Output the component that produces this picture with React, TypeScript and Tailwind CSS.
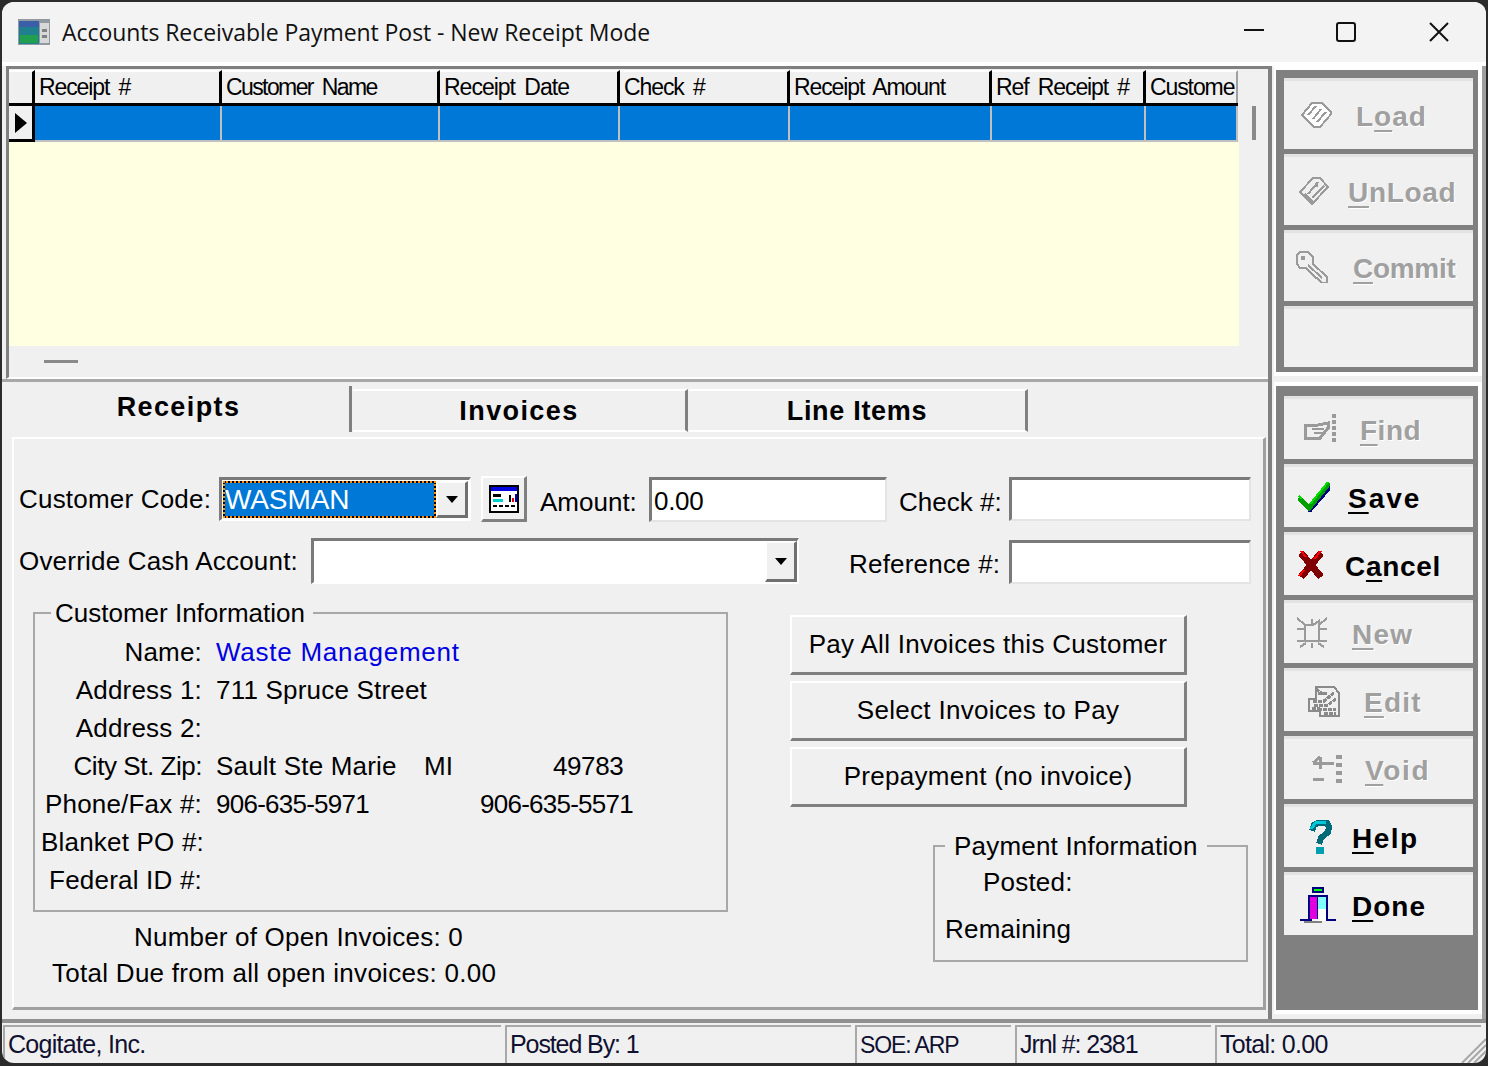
import React from "react";

const gridCols = [
  { name: "Receipt #", w: "w-[187px]", t: "tracking-[-1.1px]" },
  { name: "Customer Name", w: "w-[218px]", t: "tracking-[-1.6px]" },
  { name: "Receipt Date", w: "w-[180px]", t: "tracking-[-1px]" },
  { name: "Check #", w: "w-[170px]", t: "tracking-[-1.1px]" },
  { name: "Receipt Amount", w: "w-[202px]", t: "tracking-[-1.1px]" },
  { name: "Ref Receipt #", w: "w-[154px]", t: "tracking-[-1.1px]" },
  { name: "Custome", w: "w-[92px]", t: "tracking-[-1.1px]" },
];

function Px({ children, w = 32, h = 32 }: { children: React.ReactNode; w?: number; h?: number }) {
  return (
    <svg width={w} height={h} viewBox={`0 0 ${w} ${h}`} shapeRendering="crispEdges" fill="none" className="shrink-0">
      {children}
    </svg>
  );
}

const G = "#9a9a9a";

const LoadIcon = () => (
  <Px h={28}>
    <path d="M2 14 L12 2 L22 2 L32 12 L20 26 L14 26 Z" fill="#fff" stroke={G} strokeWidth="2" />
    <path d="M8 14 L16 5 M13 18 L21 8 M17 21 L26 11" stroke={G} strokeWidth="2" />
  </Px>
);
const UnloadIcon = () => (
  <Px h={30}>
    <path d="M2 16 L15 2 L22 2 L30 11 L14 28 Z" fill="#f0f0f0" stroke={G} strokeWidth="2" />
    <path d="M7 18 L15 26 M10 18 L20 6 M14 22 L26 10" stroke={G} strokeWidth="2" />
    <rect x="17" y="8" width="3" height="3" fill={G} />
  </Px>
);
const KeyIcon = () => (
  <Px h={32}>
    <path d="M4 1 H12 L17 6 V13 L31 26 V32 H26 L22 28 L19 26 L10 17 H4 L1 13 V4 Z" fill="#f0f0f0" stroke={G} strokeWidth="2" />
    <rect x="5" y="5" width="4" height="4" fill={G} />
    <path d="M12 14 L26 27" stroke={G} strokeWidth="2" />
  </Px>
);
const FindIcon = () => (
  <Px h={30}>
    <path d="M1 11 H14 L24 9 V14 L16 24 H6 L1 24 Z" stroke={G} strokeWidth="3" fill="#f0f0f0" />
    <path d="M8 15 H20 M10 19 H18" stroke={G} strokeWidth="2" />
    <path d="M30 0 V30" stroke={G} strokeWidth="4" strokeDasharray="4 2" />
  </Px>
);
const CheckIcon = () => (
  <Px h={30}>
    <path d="M2 18 L12 29 L32 6 V2" stroke="#000080" strokeWidth="3" />
    <path d="M1 16 L11 26 L31 1" stroke="#00a000" strokeWidth="5" />
    <path d="M1 14 L4 17 M12 22 L30 0" stroke="#00e000" strokeWidth="2" />
  </Px>
);
const CrossIcon = () => (
  <Px w={26} h={30}>
    <path d="M3 3 L23 27 M23 3 L3 27" stroke="#800000" strokeWidth="7" />
    <path d="M3 1 L8 7 M23 1 L16 9 M1 26 L6 20" stroke="#ff0000" strokeWidth="2" />
  </Px>
);
const NewIcon = () => (
  <Px h={32}>
    <path d="M9 8 H17 L23 4 V24 H9 Z" fill="#f0f0f0" stroke={G} strokeWidth="2" />
    <path d="M1 1 L9 8 M31 1 L23 8 M1 12 H9 M23 12 H31 M1 24 H9 M23 24 H31 M4 30 L10 26 M28 30 L22 26 M16 2 V8 M16 26 V31" stroke={G} strokeWidth="2" />
  </Px>
);
const EditIcon = () => (
  <Px h={32}>
    <path d="M8 2 H26 L31 8 V31 H12 V26 H1 V14 H8 Z" fill="#f0f0f0" stroke="#8a8a8a" strokeWidth="2" />
    <path d="M5 16 H16 L26 8 M6 20 H20 L28 14 M10 24 H28 M16 28 H28 M8 4 L16 10 M10 8 H20 M4 23 H12" stroke="#8a8a8a" strokeWidth="3" strokeDasharray="4 1" />
  </Px>
);
const VoidIcon = () => (
  <Px w={30} h={28}>
    <path d="M1 8 H22 M8 2 V14 M1 8 L8 2 M1 24 H12" stroke={G} strokeWidth="3" />
    <path d="M27 0 V28" stroke={G} strokeWidth="6" strokeDasharray="4 4" />
  </Px>
);
const HelpIcon = () => (
  <Px w={24} h={34}>
    <path d="M4 11 L6 5 L10 3 H19 L21 7 L20 12 L13 18 L11 24" stroke="#006a78" strokeWidth="6" />
    <path d="M3 9 L8 2 H18" stroke="#00c8d8" strokeWidth="3" />
    <rect x="8" y="27" width="8" height="7" fill="#00a0b0" />
  </Px>
);
const DoneIcon = () => (
  <Px w={36} h={36}>
    <rect x="12" y="0" width="12" height="6" fill="#000080" />
    <rect x="14" y="2" width="8" height="2" fill="#00ff00" />
    <rect x="8" y="8" width="20" height="24" fill="#000080" />
    <rect x="10" y="10" width="7" height="22" fill="#e000e0" />
    <rect x="18" y="10" width="8" height="14" fill="#80ffff" />
    <rect x="18" y="22" width="8" height="12" fill="#fff" />
    <rect x="0" y="32" width="12" height="2" fill="#000080" />
    <rect x="26" y="32" width="10" height="2" fill="#000080" />
    <rect x="4" y="34" width="18" height="2" fill="#808080" />
  </Px>
);
const CalcIcon = () => (
  <Px w={30} h={28}>
    <rect x="1" y="1" width="28" height="26" fill="#fff" stroke="#000" strokeWidth="2" />
    <rect x="2" y="2" width="26" height="4" fill="#0000e0" />
    <rect x="4" y="9" width="8" height="3" fill="#000" />
    <rect x="4" y="14" width="10" height="3" fill="#00d0d0" />
    <rect x="20" y="10" width="2" height="7" fill="#000" />
    <rect x="23" y="13" width="2" height="4" fill="#e00000" />
    <rect x="26" y="9" width="2" height="8" fill="#0000c0" />
    <path d="M4 21 H26" stroke="#000" strokeWidth="2" strokeDasharray="4 2" />
  </Px>
);
const AppIcon = () => (
  <Px w={32} h={26}>
    <rect width="32" height="26" fill="#909aa0" />
    <rect x="1" y="2" width="20" height="23" fill="#1f7f8f" />
    <rect x="1" y="2" width="20" height="6" fill="#3a5fa8" />
    <rect x="2" y="16" width="18" height="8" fill="#1f9f4f" />
    <rect x="22" y="4" width="9" height="20" fill="#d8d8d8" />
    <rect x="24" y="10" width="5" height="3" fill="#808080" />
    <rect x="24" y="16" width="5" height="3" fill="#808080" />
  </Px>
);

function U({ children }: { children: React.ReactNode }) {
  return <span className="underline decoration-2 underline-offset-[4px]">{children}</span>;
}

function ToolButton({
  icon,
  label,
  disabled,
  className,
}: {
  icon: React.ReactNode;
  label: React.ReactNode;
  disabled?: boolean;
  className: string;
}) {
  return (
    <div
      className={`flex items-center bg-[#f0f0f0] border-t-[3px] border-t-[#e3e3e3] border-b-[3px] border-b-[#808080] text-[28px] font-bold ${
        disabled ? "text-[#a0a0a0] [text-shadow:1px_1px_0_#fff]" : "text-black"
      } ${className}`}
    >
      {icon}
      <span className="pt-[3px]">{label}</span>
    </div>
  );
}

function Sunken({ className, children }: { className: string; children?: React.ReactNode }) {
  return (
    <div
      className={`bg-white border-t-[3px] border-l-[3px] border-t-[#7a7a7a] border-l-[#7a7a7a] border-b-2 border-r-2 border-b-[#e4e4e4] border-r-[#e4e4e4] flex items-center text-[26px] tracking-[-0.3px] ${className}`}
    >
      {children}
    </div>
  );
}

function DropArrow() {
  return (
    <div className="w-[32px] h-full bg-[#f0f0f0] border-2 border-t-white border-l-white border-b-[3px] border-r-[3px] border-b-[#707070] border-r-[#707070] flex items-center justify-center shrink-0">
      <div className="w-0 h-0 border-l-[6px] border-r-[6px] border-t-[7px] border-l-transparent border-r-transparent border-t-black" />
    </div>
  );
}

function InfoRow({ label, children }: { label: React.ReactNode; children?: React.ReactNode }) {
  return (
    <div className="flex items-center h-[38px]">
      <div className="w-[161px] text-right shrink-0">{label}</div>
      <div className="ml-[14px] flex-1 flex">{children}</div>
    </div>
  );
}

function ActionButton({ label }: { label: string }) {
  return (
    <div className="h-[60px] w-[397px] flex items-center justify-center bg-[#f0f0f0] border-2 border-t-white border-l-white border-b-[3px] border-r-[3px] border-b-[#808080] border-r-[#808080] text-[26px] tracking-[0.3px]">
      {label}
    </div>
  );
}

function StatusCell({ className, children }: { className: string; children: React.ReactNode }) {
  return (
    <div className={`h-full flex items-center border-t-2 border-l-2 border-[#a8a8a8] pl-[3px] text-[#101030] ${className}`}>
      {children}
    </div>
  );
}

export default function App() {
  return (
    <div className="w-[1488px] h-[1066px] bg-[#2b2b2b] pt-[2px] px-[2px] pb-[3px] font-['Liberation_Sans',sans-serif] text-black overflow-hidden">
      <div className="h-full flex flex-col rounded-[12px] overflow-hidden bg-[#f0f0f0]">
        {/* Title bar */}
        <div className="h-[64px] border-b-[4px] border-b-white bg-[#f3f3f3] flex items-center shrink-0">
          <div className="ml-[16px]">
            <AppIcon />
          </div>
          <div className="ml-[12px] font-['Open_Sans',sans-serif] text-[23px] tracking-[-0.06px] text-[#111] flex-1">
            Accounts Receivable Payment Post - New Receipt Mode
          </div>
          <div className="flex items-center mr-[37px]">
            <svg width="20" height="20" viewBox="0 0 20 20" shapeRendering="crispEdges" className="mr-[72px]">
              <rect x="0" y="7" width="20" height="2" fill="#111" />
            </svg>
            <svg width="20" height="20" viewBox="0 0 20 20" className="mr-[73px]">
              <rect x="1" y="1" width="18" height="18" rx="2" fill="none" stroke="#111" strokeWidth="2" />
            </svg>
            <svg width="20" height="20" viewBox="0 0 20 20">
              <path d="M1 1 L19 19 M19 1 L1 19" stroke="#111" strokeWidth="2" />
            </svg>
          </div>
        </div>

        <div className="flex flex-1 min-h-0">
          {/* Left side */}
          <div className="w-[1270px] shrink-0 flex flex-col border-r-[4px] border-r-[#808080]">
            {/* Grid panel */}
            <div className="h-[316px] shrink-0 pl-[4px] border-b-[3px] border-b-[#a8a8a8]">
              <div className="h-[313px] border-t-[3px] border-l-[3px] border-[#808080] pt-[1px] border-b-2 border-b-white">
                <div className="flex h-[36px] w-fit border-b-[3px] border-black">
                  <div className="w-[26px] border-r-[3px] border-black bg-[#f0f0f0] shrink-0 border-t-2 border-t-white" />
                  {gridCols.map((c, i) => (
                    <div
                      key={c.name}
                      className={`${c.w} ${c.t} shrink-0 flex items-center pl-[4px] text-[23px] [word-spacing:4px] border-t-2 border-t-white ${
                        i < gridCols.length - 1 ? "border-r-[3px] border-r-black" : "border-r-2 border-r-[#a0a0a0]"
                      } whitespace-nowrap overflow-hidden`}
                    >
                      {c.name}
                    </div>
                  ))}
                </div>
                <div className="flex h-[36px]">
                  <div className="w-[26px] shrink-0 flex items-center justify-center border-r-[3px] border-b-[3px] border-black">
                    <div className="w-0 h-0 border-y-[10px] border-l-[12px] border-y-transparent border-l-black" />
                  </div>
                  {gridCols.map((c) => (
                    <div key={c.name} className={`${c.w} shrink-0 bg-[#0078d7] border-r-2 border-r-[#c0c0c0] border-b-2 border-b-[#c0c0c0]`} />
                  ))}
                  <div className="ml-[14px] w-[4px] h-[34px] bg-[#8a8a8a]" />
                </div>
                <div className="w-[1230px] h-[204px] bg-[#ffffe1]" />
                <div className="ml-[35px] mt-[14px] w-[34px] h-[3px] bg-[#8a8a8a]" />
              </div>
            </div>

            {/* Tabs */}
            <div className="flex-1 min-h-0 pl-[6px] pt-[4px] flex flex-col">
              <div className="flex h-[46px] shrink-0 items-end text-[27px] font-bold tracking-[1.4px]">
                <div className="w-[344px] h-[46px] flex items-center justify-center pb-[4px] border-r-[3px] border-r-[#808080]">
                  Receipts
                </div>
                <div className="w-[335px] h-[43px] ml-[1px] flex items-center justify-center pt-[1px] border-t-2 border-t-white border-r-[3px] border-r-[#808080] border-b-2 border-b-white">
                  Invoices
                </div>
                <div className="w-[339px] h-[43px] ml-[1px] flex items-center justify-center pt-[1px] tracking-[0.7px] border-t-2 border-t-white border-r-[3px] border-r-[#808080] border-b-2 border-b-white">
                  Line Items
                </div>
              </div>

              <div className="ml-[4px] mr-[2px] mt-[5px] h-[573px] border-t-2 border-l-2 border-white border-r-[3px] border-r-[#a0a0a0] border-b-[3px] border-b-[#a0a0a0] text-[26px] tracking-[0.2px] whitespace-nowrap">
                {/* Row one */}
                <div className="flex items-center h-[48px] mt-[36px] pl-[5px]">
                  <div className="w-[200px]">Customer Code:</div>
                  <div className="w-[252px] h-[44px] bg-white border-t-[3px] border-l-[3px] border-[#7a7a7a] border-b-2 border-r-2 border-b-white border-r-white flex p-[1px]">
                    <div className="flex-1 border-2 border-dotted border-[#ff9000] bg-black">
                      <div className="h-full bg-[#0078d7] text-white flex items-center text-[28px] font-normal tracking-[-0.1px]">WASMAN</div>
                    </div>
                    <DropArrow />
                  </div>
                  <div className="ml-[10px] w-[46px] h-[46px] bg-[#f0f0f0] border-2 border-t-white border-l-white border-b-[3px] border-r-[3px] border-b-[#808080] border-r-[#808080] flex items-center justify-center">
                    <CalcIcon />
                  </div>
                  <div className="ml-[13px] w-[109px] pt-[7px] tracking-[0px]">Amount:</div>
                  <Sunken className="w-[238px] h-[45px] pl-[2px] pt-[3px]">0.00</Sunken>
                  <div className="ml-[12px] w-[110px] pt-[7px] tracking-[0px]">Check #:</div>
                  <Sunken className="w-[242px] h-[44px]" />
                </div>

                {/* Row two */}
                <div className="flex items-center h-[46px] mt-[15px] pl-[5px]">
                  <div className="w-[292px]">Override Cash Account:</div>
                  <div className="w-[488px] h-[46px] bg-white border-t-[3px] border-l-[3px] border-[#7a7a7a] border-b-2 border-r-2 border-b-white border-r-white flex justify-end">
                    <DropArrow />
                  </div>
                  <div className="ml-[50px] w-[160px] pt-[6px]">Reference #:</div>
                  <Sunken className="w-[242px] h-[44px] self-end" />
                </div>

                <div className="flex mt-[14px]">
                  <div className="ml-[19px] w-[695px] shrink-0">
                    <fieldset className="h-[314px] border-2 border-[#a8a8a8] pl-[6px] m-0 min-w-0">
                      <legend className="ml-[10px] pl-[4px] pr-[8px] leading-[30px] tracking-[0px]">Customer Information</legend>
                      <div className="mt-[5px]">
                        <InfoRow label="Name:">
                          <span className="text-[#0000e0] tracking-[0.75px]">Waste Management</span>
                        </InfoRow>
                        <InfoRow label="Address 1:">
                          <span className="tracking-[0.2px]">711 Spruce Street</span>
                        </InfoRow>
                        <InfoRow label="Address 2:" />
                        <InfoRow label={<span className="tracking-[-0.45px]">City St. Zip:</span>}>
                          <span className="w-[208px]">Sault Ste Marie</span>
                          <span className="w-[129px]">MI</span>
                          <span className="tracking-[-0.4px]">49783</span>
                        </InfoRow>
                        <InfoRow label="Phone/Fax #:">
                          <span className="w-[264px] tracking-[-0.75px]">906-635-5971</span>
                          <span className="tracking-[-0.75px]">906-635-5571</span>
                        </InfoRow>
                        <InfoRow label="Blanket PO #:" />
                        <InfoRow label="Federal ID #:" />
                      </div>
                    </fieldset>
                    <div className="mt-[7px] ml-[19px] h-[36px] flex items-center pl-[82px] tracking-[0.2px]">Number of Open Invoices: 0</div>
                    <div className="ml-[19px] h-[36px] flex items-center tracking-[0.28px]">Total Due from all open invoices: 0.00</div>
                  </div>

                  <div className="ml-[62px] w-[460px] pt-[17px] shrink-0">
                    <div className="flex flex-col gap-[6px]">
                      <ActionButton label="Pay All Invoices this Customer" />
                      <ActionButton label="Select Invoices to Pay" />
                      <ActionButton label="Prepayment (no invoice)" />
                    </div>
                    <fieldset className="mt-[24px] ml-[143px] w-[315px] h-[131px] border-2 border-[#a8a8a8] m-0 min-w-0 pl-[10px]">
                      <legend className="px-[9px] leading-[30px]">Payment Information</legend>
                      <div className="pl-[38px] h-[36px] flex items-center mt-[3px]">Posted:</div>
                      <div className="h-[46px] flex items-center mt-[6px]">Remaining</div>
                    </fieldset>
                  </div>
                </div>
              </div>
            </div>
          </div>

          {/* Right toolbars */}
          <div className="flex-1 min-w-0 flex flex-col pl-[2px] border-r-[4px] border-r-[#a0a0a0]">
            <div className="h-[310px] w-[208px] border-t-[4px] border-l-[2px] border-r-[4px] border-b-[4px] border-white shrink-0">
              <div className="h-full bg-[#808080] pt-[8px] pl-[8px] pr-[5px] pb-[2px] flex flex-col gap-[2px]">
                <ToolButton disabled icon={<LoadIcon />} className="h-[74px] pl-[16px] gap-[24px] tracking-[1px]" label={<>L<U>o</U>ad</>} />
                <ToolButton disabled icon={<UnloadIcon />} className="h-[74px] pl-[14px] gap-[18px] tracking-[0.7px]" label={<><U>U</U>nLoad</>} />
                <ToolButton disabled icon={<KeyIcon />} className="h-[74px] pl-[12px] gap-[25px] tracking-[-0.3px]" label={<><U>C</U>ommit</>} />
                <ToolButton icon={null} className="h-[64px]" label="" />
              </div>
            </div>
            <div className="mt-[6px] mb-[5px] flex-1 min-h-0 w-[208px] border-t-[4px] border-l-[2px] border-white border-r-[4px] border-b-[4px]">
              <div className="h-full bg-[#808080] pt-[10px] pl-[8px] pr-[5px] flex flex-col gap-[2px]">
                <ToolButton disabled icon={<FindIcon />} className="h-[66px] pl-[20px] gap-[24px] tracking-[0.5px]" label={<><U>F</U>ind</>} />
                <ToolButton icon={<CheckIcon />} className="h-[66px] pl-[14px] gap-[18px] tracking-[2px]" label={<><U>S</U>ave</>} />
                <ToolButton icon={<CrossIcon />} className="h-[66px] pl-[14px] gap-[21px] tracking-[0.7px]" label={<>C<U>a</U>ncel</>} />
                <ToolButton disabled icon={<NewIcon />} className="h-[66px] pl-[12px] gap-[24px] tracking-[1.2px]" label={<><U>N</U>ew</>} />
                <ToolButton disabled icon={<EditIcon />} className="h-[66px] pl-[24px] gap-[24px] tracking-[1.2px]" label={<><U>E</U>dit</>} />
                <ToolButton disabled icon={<VoidIcon />} className="h-[66px] pl-[28px] gap-[23px] tracking-[1.7px]" label={<><U>V</U>oid</>} />
                <ToolButton icon={<HelpIcon />} className="h-[66px] pl-[24px] gap-[20px] tracking-[1.5px]" label={<><U>H</U>elp</>} />
                <ToolButton icon={<DoneIcon />} className="h-[66px] pl-[16px] gap-[16px] tracking-[1px]" label={<><U>D</U>one</>} />
              </div>
            </div>
          </div>
        </div>

        {/* Status bar */}
        <div className="h-[44px] shrink-0 flex gap-[4px] pl-[1px] border-t-[4px] border-t-[#909090] pt-[2px] relative whitespace-nowrap">
          <StatusCell className="w-[498px] text-[25px] tracking-[-0.7px]">Cogitate, Inc.</StatusCell>
          <StatusCell className="w-[346px] text-[25px] tracking-[-1.1px]">Posted By: 1</StatusCell>
          <StatusCell className="w-[156px] text-[23px] tracking-[-1.1px]">SOE: ARP</StatusCell>
          <StatusCell className="w-[196px] text-[25px] tracking-[-1.1px]">Jrnl #: 2381</StatusCell>
          <StatusCell className="w-[266px] text-[25px] tracking-[-0.7px]">Total: 0.00</StatusCell>
          <svg width="28" height="28" viewBox="0 0 28 28" className="absolute right-0 bottom-0">
            <path d="M28 4 L4 28 M28 10 L10 28 M28 16 L16 28 M28 22 L22 28" stroke="#a8a8a8" strokeWidth="2" />
          </svg>
        </div>
      </div>
    </div>
  );
}
